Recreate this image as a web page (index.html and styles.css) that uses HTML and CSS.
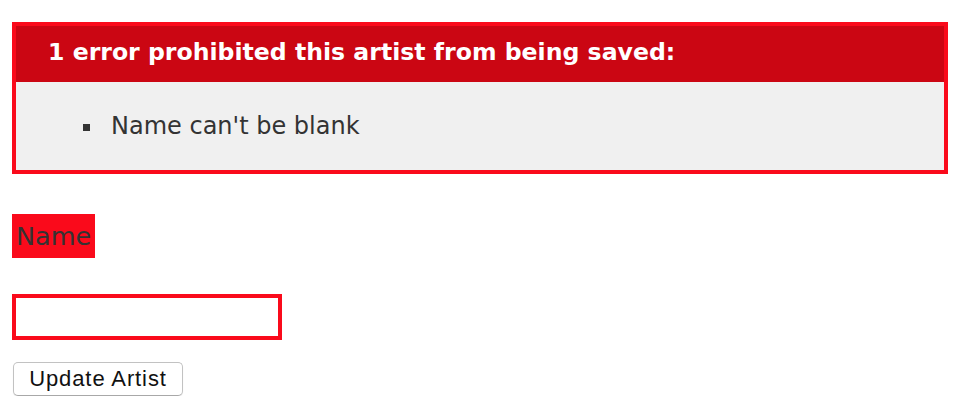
FILE: index.html
```html
<!DOCTYPE html>
<html>
<head>
<meta charset="utf-8">
<link rel="stylesheet" href="styles.css">
</head>
<body>
<form class="artist-form">
  <div class="error-explanation">
    <h2 class="error-title">1 error prohibited this artist from being saved:</h2>
    <ul class="error-list">
      <li>Name can't be blank</li>
    </ul>
  </div>
  <div class="field">
    <div class="field-with-errors"><label class="field-label" for="artist_name">Name</label></div>
  </div>
  <div class="field">
    <div class="field-with-errors"><input class="text-input" type="text" id="artist_name"></div>
  </div>
  <div class="actions">
    <button type="button" class="submit-btn">Update Artist</button>
  </div>
</form>
</body>
</html>
```
FILE: styles.css
```css
html, body {
  margin: 0;
  padding: 0;
  background: #fff;
}
body {
  font-family: "DejaVu Sans", Verdana, sans-serif;
  color: #333;
  padding: 22px 24px 0 12px;
}
.artist-form {
  display: block;
}
.error-explanation {
  width: 928px;
  border: 4px solid #fa0a1b;
  background: #f0f0f0;
  margin-bottom: 40px;
}
.error-title {
  margin: 0;
  background: #cb0613;
  color: #fff;
  font-size: 23.6px;
  font-weight: bold;
  height: 56px;
  line-height: 52px;
  padding: 0 0 0 32px;
  box-sizing: border-box;
}
.error-list {
  margin: 0;
  padding: 0 0 0 88px;
  height: 88px;
  display: flex;
  flex-direction: column;
  justify-content: center;
}
.error-list li {
  list-style: square;
  font-size: 24px;
  line-height: 30px;
  padding-left: 7px;
}
.field {
  margin-bottom: 36px;
}
.field-with-errors {
  display: table;
  padding: 4px;
  background: #fa0a1b;
}
.field-label {
  display: block;
  font-size: 25.5px;
  line-height: 36px;
  color: #333;
}
.text-input {
  display: block;
  width: 262px;
  height: 38px;
  box-sizing: border-box;
  border: 1px solid #b8b8b8;
  border-top-color: #9c9c9c;
  background: #fff;
  margin: 0;
  padding: 0;
  box-shadow: inset 0 0 0 1px #fff;
  outline: 1px solid #fff;
  outline-offset: -1px;
}
.actions {
  margin-top: -14px;
  padding-left: 1px;
}
.submit-btn {
  font-family: "Liberation Sans", Arial, sans-serif;
  font-size: 22px;
  letter-spacing: 0.9px;
  color: #111;
  background: #fff;
  border: 1px solid #c2c2c2;
  border-bottom-color: #a8a8a8;
  border-radius: 5px;
  width: 170px;
  height: 34px;
  padding: 0;
  margin: 0;
  box-shadow: 0 1px 1px rgba(0,0,0,0.08);
}
```
